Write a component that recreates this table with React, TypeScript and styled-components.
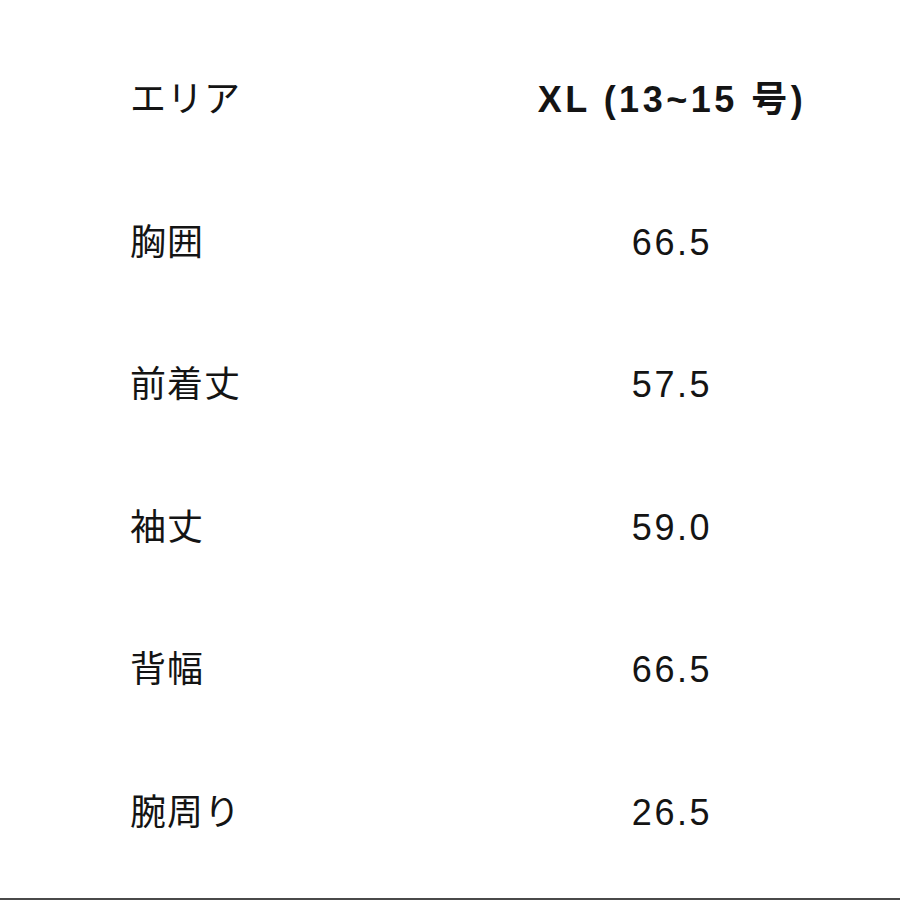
import React from "react";
import styled, { createGlobalStyle } from "styled-components";

const GlobalStyle = createGlobalStyle`
	html, body {
		margin: 0;
		padding: 0;
		background: #ffffff;
	}
	body {
		font-family: "Liberation Sans", "Noto Sans CJK JP", sans-serif;
		color: #141414;
	}
`;

const Page = styled.div`
	width: 900px;
	height: 900px;
	display: flex;
	flex-direction: column;
	box-sizing: border-box;
	padding-top: 29px;
	overflow: hidden;
`;

const Table = styled.div`
	display: grid;
	grid-template-columns: 410px 260px;
	grid-auto-rows: 142.5px;
	padding-left: 130px;
`;

const Cell = styled.div<{ $value?: boolean; $head?: boolean }>`
	display: flex;
	align-items: center;
	justify-content: ${(p) => (p.$value ? "center" : "flex-start")};
	font-size: 36px;
	line-height: 1;
	font-weight: ${(p) => (p.$head && p.$value ? 700 : 400)};
	letter-spacing: ${(p) => (p.$value ? (p.$head ? "3.5px" : "2.6px") : "1px")};
	padding-left: ${(p) => (p.$value ? (p.$head ? "4px" : "4px") : "0")};
	white-space: nowrap;
`;

const BottomRule = styled.div`
	margin-top: auto;
	height: 2px;
	background: #4a4a4a;
`;

const rows = [
	{ area: "胸囲", size: "66.5" },
	{ area: "前着丈", size: "57.5" },
	{ area: "袖丈", size: "59.0" },
	{ area: "背幅", size: "66.5" },
	{ area: "腕周り", size: "26.5" },
];

export default function App() {
	return (
		<>
			<GlobalStyle />
			<Page>
				<Table>
					<Cell $head>エリア</Cell>
					<Cell $head $value>
						XL (13~15 号)
					</Cell>
					{rows.map((r) => (
						<React.Fragment key={r.area}>
							<Cell>{r.area}</Cell>
							<Cell $value>{r.size}</Cell>
						</React.Fragment>
					))}
				</Table>
				<BottomRule />
			</Page>
		</>
	);
}
